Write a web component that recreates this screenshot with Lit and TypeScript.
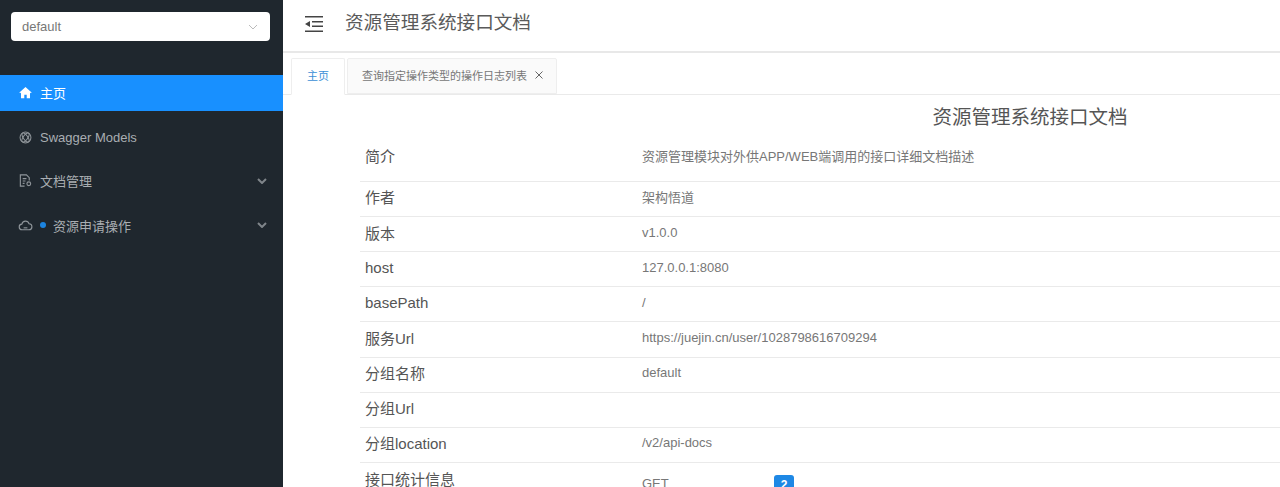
import { LitElement, html, css, unsafeCSS } from "lit";
import { customElement } from "lit/decorators.js";

const FONT = `"Liberation Sans", "Noto Sans CJK SC", sans-serif`;

const chevron = html`<svg class="chev" viewBox="0 0 10 6" width="10" height="6"><path d="M1 1l4 4 4-4" fill="none" stroke="currentColor" stroke-width="2"/></svg>`;

const rows: [string, string][] = [
  ["作者", "架构悟道"],
  ["版本", "v1.0.0"],
  ["host", "127.0.0.1:8080"],
  ["basePath", "/"],
  ["服务Url", "https://juejin.cn/user/1028798616709294"],
  ["分组名称", "default"],
  ["分组Url", ""],
  ["分组location", "/v2/api-docs"],
];

@customElement("app-root")
export class AppRoot extends LitElement {
  static styles = css`
    :host { display: flex; width: 1280px; height: 487px; overflow: hidden; font-family: ${unsafeCSS(FONT)}; background: #fff; }
    .side { width: 283px; flex: none; background: #1f272e; display: flex; flex-direction: column; }
    .select { margin: 12px 13px 0 11px; height: 29px; background: #fff; border-radius: 4px; display: flex; align-items: center; justify-content: space-between; padding: 0 12px 0 11px; font-size: 13px; color: #777; }
    .select .chev path { stroke-width: 1; }
    .select svg { color: #bbb; }
    .menu { margin-top: 34px; display: flex; flex-direction: column; }
    .item { height: 44.3px; display: flex; align-items: center; padding: 0 16px 0 18px; color: #a9aeb2; font-size: 13px; box-sizing: border-box; }
    .item.on { height: 36px; background: #1890ff; color: #fff; margin-bottom: 4px; padding-bottom: 1px; }
    .item.cjk { padding-bottom: 1px; }
    .item svg.ic { width: 15px; height: 15px; margin-right: 7px; flex: none; }
    .item:not(.on) svg.ic { color: #8f959a; }
    .item .chev { margin-left: auto; color: #7f858a; }
    .dot { width: 6px; height: 6px; border-radius: 50%; background: #1c84e0; margin: 0 7px 0 0; flex: none; }
    .main { flex: 1; min-width: 0; display: flex; flex-direction: column; }
    .head { height: 51px; flex: none; border-bottom: 2px solid #e8e8e8; display: flex; align-items: flex-start; padding-left: 22px; }
    .head svg { width: 18px; height: 16px; margin: 16px 22px 0 0; color: #444; flex: none; }
    .head h1 { margin: 11px 0 0; font-size: 18.6px; line-height: 24px; font-weight: 400; color: #5a5a5a; }
    .tabs { height: 36px; margin-top: 5px; padding-left: 8px; display: flex; border-bottom: 1px solid #eaeaea; gap: 2px; flex: none; }
    .tab { height: 36px; border: 1px solid #eee; box-sizing: border-box; border-radius: 2px 2px 0 0; display: flex; align-items: center; font-size: 11px; color: #777; background: #fafafa; padding-bottom: 2px; }
    .tab.on { width: 54px; height: 37px; justify-content: center; color: #3b8fd6; background: #fff; border-bottom-color: #fff; padding-bottom: 4px; }
    .tab.two { width: 210px; padding-left: 14px; }
    .tab svg { width: 8px; height: 8px; margin-left: 8px; color: #666; }
    .doc { margin-left: 77px; width: 1340px; }
    .title { height: 41px; display: flex; align-items: center; justify-content: center; font-size: 19.5px; color: #555; }
    .row { display: flex; align-items: center; height: 35.15px; border-top: 1px solid #eaeaea; box-sizing: border-box; font-size: 15px; color: #555; padding-bottom: 4px; }
    .row.first { border-top: 0; height: 44.8px; padding-bottom: 5px; }
    .k { width: 282px; padding-left: 5px; flex: none; box-sizing: border-box; }
    .v { font-size: 13px; color: #777; }
    .get { width: 132px; flex: none; padding-top: 8px; }
    .badge { background: #1e88e5; color: #fff; border-radius: 3px; width: 20px; height: 20px; display: flex; align-items: center; justify-content: center; font-size: 12px; font-weight: 700; margin-top: 7px; }
    .stat { align-items: flex-start; padding-top: 5px; height: 40px; padding-bottom: 0; }
  `;

  render() {
    return html`
      <aside class="side">
        <div class="select"><span>default</span>${chevron}</div>
        <nav class="menu">
          <div class="item on">
            <svg class="ic" viewBox="0 0 16 16"><path fill="currentColor" d="M8 2 1.500 8l.7.8 1-.9V14h3.500v-3.500h2.600V14h3.500V7.900l1 .9.7-.8z"/></svg>主页
          </div>
          <div class="item">
            <svg class="ic" viewBox="0 0 16 16" fill="none" stroke="currentColor" stroke-width="1.100"><circle cx="8" cy="8" r="5.800"/><ellipse cx="8" cy="8" rx="2.400" ry="5.600" transform="rotate(-35 8 8)"/><ellipse cx="8" cy="8" rx="2.400" ry="5.600" transform="rotate(35 8 8)"/></svg>Swagger Models
          </div>
          <div class="item cjk">
            <svg class="ic" viewBox="0 0 16 16" fill="none" stroke="currentColor" stroke-width="1.200"><path d="M7 14H2.500V2h6.500L12 5v3"/><path d="M5 6h4M5 8.500h3M5 11h2"/><circle cx="11.500" cy="11.500" r="2"/></svg>文档管理${chevron}
          </div>
          <div class="item cjk">
            <svg class="ic" viewBox="0 0 16 16" fill="none" stroke="currentColor" stroke-width="1.200"><path d="M4.500 12.500a3 3 0 0 1-.4-6 4 4 0 0 1 7.700-.4 3.200 3.200 0 0 1-.3 6.400z"/><path d="M6 10.500h4"/></svg><span class="dot"></span>资源申请操作${chevron}
          </div>
        </nav>
      </aside>
      <main class="main">
        <header class="head">
          <svg viewBox="0 0 18 16"><path fill="currentColor" d="M0 0h18v1.600H0zM7 5h11v1.600H7zM7 9.400h11V11H7zM0 14.400h18V16H0zM5 5v6L0 8z"/></svg>
          <h1>资源管理系统接口文档</h1>
        </header>
        <div class="tabs">
          <div class="tab on">主页</div>
          <div class="tab two">查询指定操作类型的操作日志列表<svg viewBox="0 0 8 8"><path d="M.5.5l7 7M7.500.5l-7 7" stroke="currentColor" fill="none"/></svg></div>
        </div>
        <section class="doc">
          <div class="title">资源管理系统接口文档</div>
          <div class="row first"><div class="k">简介</div><div class="v">资源管理模块对外供APP/WEB端调用的接口详细文档描述</div></div>
          ${rows.map(([k, v]) => html`<div class="row"><div class="k">${k}</div><div class="v">${v}</div></div>`)}
          <div class="row stat"><div class="k">接口统计信息</div><div class="v get">GET</div><div class="badge">2</div></div>
        </section>
      </main>
    `;
  }
}
